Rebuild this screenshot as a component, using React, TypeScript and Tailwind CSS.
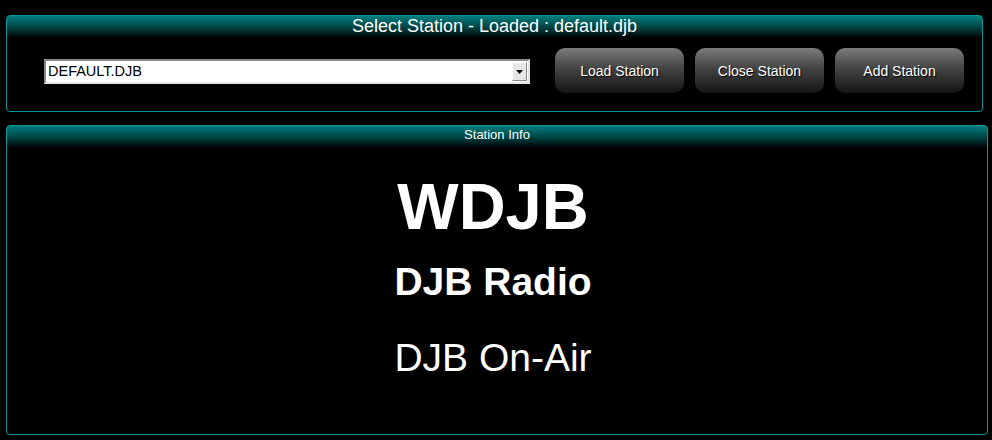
const FONT = "font-['Liberation_Sans',Arial,sans-serif]";

function Panel({
  className,
  headerClass,
  title,
  children,
}: {
  className: string;
  headerClass: string;
  title: string;
  children: React.ReactNode;
}) {
  return (
    <div
      className={`flex flex-col rounded-[4px] border border-[#0a9494] bg-[linear-gradient(to_bottom,#007d7d_0px,#004040_12px,#000_22px)] ${className}`}
    >
      <div className={`flex items-center justify-center text-white ${headerClass}`}>{title}</div>
      {children}
    </div>
  );
}

function Button({ label }: { label: string }) {
  return (
    <button className="flex h-[45px] w-[129px] items-center justify-center rounded-[10px] bg-[linear-gradient(to_bottom,#7c7c7c_0%,#444_45%,#141414_100%)] pt-[1px] text-[14px] text-white [text-shadow:1px_1px_1px_#000]">
      {label}
    </button>
  );
}

export default function App() {
  return (
    <div className={`h-[440px] w-[992px] bg-black pl-[6px] pt-[15px] ${FONT}`}>
      <Panel className="h-[97px] w-[977px]" headerClass="h-[21px] text-[18px] leading-[21px]" title="Select Station - Loaded : default.djb">
        <div className="flex items-center pl-[37px] pt-[11px]">
          {/* station dropdown */}
          <div className="mt-[2px] flex h-[25px] w-[486px] items-center border-2 border-b-[#e4e4e4] border-l-[#8a8a8a] border-r-[#e4e4e4] border-t-[#8a8a8a] bg-white">
            <span className="flex-1 pl-[2px] text-[14.5px] leading-none text-black">DEFAULT.DJB</span>
            <div className="mr-[1px] flex h-[19px] w-[15px] items-center justify-center border border-b-[#888] border-l-[#fff] border-r-[#888] border-t-[#fff] bg-[#e6e6e6]">
              <svg width="7" height="4" viewBox="0 0 7 4">
                <path d="M0 0h7L3.5 4z" fill="#000" />
              </svg>
            </div>
          </div>
          <div className="ml-[25px] flex gap-[11px]">
            <Button label="Load Station" />
            <Button label="Close Station" />
            <Button label="Add Station" />
          </div>
        </div>
      </Panel>

      <Panel className="mt-[13px] h-[310px] w-[982px]" headerClass="h-[18px] text-[13px] leading-[18px]" title="Station Info">
        <div className="flex flex-col items-center pr-[8px] text-white">
          <div className="mt-[30px] text-[65px] font-bold leading-[65px]">WDJB</div>
          <div className="mt-[23px] text-[39px] font-bold leading-[39px]">DJB Radio</div>
          <div className="mt-[37px] text-[39px] leading-[39px]">DJB On-Air</div>
        </div>
      </Panel>
    </div>
  );
}
